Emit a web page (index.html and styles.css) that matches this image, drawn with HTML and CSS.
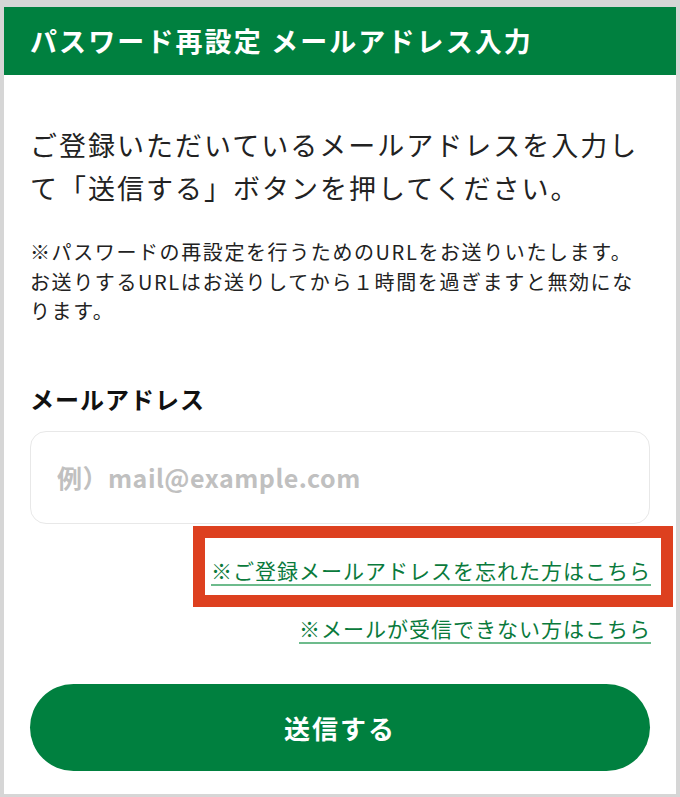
FILE: index.html
```html
<!DOCTYPE html>
<html lang="ja">
<head>
<meta charset="utf-8">
<title>パスワード再設定 メールアドレス入力</title>
<link rel="stylesheet" href="styles.css">
</head>
<body>
<div class="card">
  <header class="header">
    <h1 class="title">パスワード再設定 メールアドレス入力</h1>
  </header>
  <main class="content">
    <p class="lead">ご登録いただいているメールアドレスを入力して「送信する」ボタンを押してください。</p>
    <p class="note">※パスワードの再設定を行うためのURLをお送りいたします。<br>お送りするURLはお送りしてから１時間を過ぎますと無効になります。</p>
    <label class="label" for="email">メールアドレス</label>
    <input class="input" id="email" type="email" placeholder="例）mail@example.com">
    <div class="links">
      <div class="link-row">
        <a class="link highlighted" href="#">※ご登録メールアドレスを忘れた方はこちら<span class="highlight-box"></span></a>
      </div>
      <div class="link-row">
        <a class="link" href="#">※メールが受信できない方はこちら</a>
      </div>
    </div>
    <button class="submit" type="button">送信する</button>
  </main>
</div>
</body>
</html>
```

FILE: styles.css
```css
html, body {
  margin: 0;
  padding: 0;
}
body {
  background: #d6d6d6;
  padding: 7px 4px 3px 4px;
  font-family: "Noto Sans CJK JP", "Noto Sans", sans-serif;
  color: #222;
}
.card {
  background: #fff;
  min-height: 787px;
  box-sizing: border-box;
}
.header {
  background: #00803f;
  height: 68px;
  display: flex;
  align-items: center;
  padding: 0 26px;
}
.title {
  margin: 0;
  color: #fff;
  font-size: 27px;
  font-weight: 700;
  letter-spacing: 2.1px;
  line-height: 1;
  padding-bottom: 2px;
}
.content {
  padding: 48px 26px 22px 26px;
  display: flex;
  flex-direction: column;
}
.lead {
  margin: 0;
  font-size: 27px;
  line-height: 43px;
  letter-spacing: 2px;
  color: #222;
}
.note {
  margin: 28px 0 0 0;
  font-size: 20px;
  line-height: 29.5px;
  letter-spacing: 1.6px;
  color: #222;
}
.label {
  margin-top: 56px;
  font-size: 24px;
  font-weight: 700;
  line-height: 34px;
  letter-spacing: 1px;
  color: #111;
}
.input {
  margin-top: 15px;
  height: 93px;
  box-sizing: border-box;
  border: 1.5px solid #e8e8e8;
  border-radius: 16px;
  padding: 0 26px;
  font-family: "Noto Sans CJK JP", "Noto Sans", sans-serif;
  font-size: 25px;
  font-weight: 700;
  letter-spacing: 0.5px;
  color: #333;
  outline: none;
}
.input::placeholder {
  color: #c0c0c0;
}
.links {
  margin-top: 31px;
  display: flex;
  flex-direction: column;
  gap: 26px;
}
.link-row {
  text-align: right;
  line-height: 30px;
}
.link {
  position: relative;
  display: inline-block;
  font-size: 21px;
  letter-spacing: 1px;
  color: #0a7a3c;
  text-decoration: underline;
  text-decoration-color: #6dbb8c;
  text-decoration-thickness: 2px;
  text-underline-offset: 5px;
  margin-right: -1px;
}
.highlight-box {
  position: absolute;
  left: -18px;
  right: -22px;
  top: -29px;
  bottom: -22px;
  border: 12px solid #dd401f;
  pointer-events: none;
}
.submit {
  margin-top: 39px;
  height: 87px;
  border: none;
  border-radius: 44px;
  background: #00803f;
  color: #fff;
  font-family: "Noto Sans CJK JP", "Noto Sans", sans-serif;
  font-size: 26px;
  font-weight: 700;
  letter-spacing: 2px;
  cursor: pointer;
}
```
